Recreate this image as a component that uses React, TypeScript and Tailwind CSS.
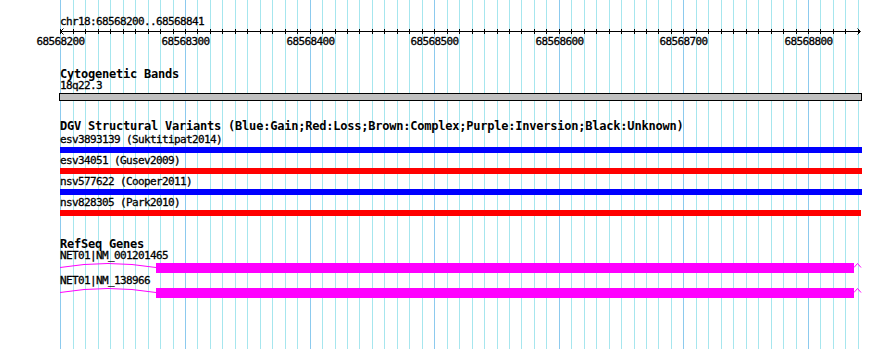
import React from "react";

const fam = "font-['DejaVu_Sans_Mono','Liberation_Mono',monospace]";
const small = `${fam} text-[11px] leading-[12px] tracking-[-0.62px] whitespace-nowrap text-black h-[12px] [-webkit-text-stroke:0.3px_#000]`;
const geneLabel = `${fam} text-[11px] leading-[11px] tracking-[-0.62px] whitespace-nowrap text-black h-[12px] [-webkit-text-stroke:0.3px_#000]`;
const bold = `${fam} font-bold text-[12px] leading-[12px] tracking-[-0.22px] whitespace-nowrap text-black h-[12px]`;

const gridX = Array.from({ length: 65 }, (_, k) => Math.round(60.4 + 12.46 * k));

function Grid() {
  return (
    <svg className="absolute inset-0" width={890} height={349} shapeRendering="crispEdges">
      {gridX.map((x, k) => (
        <rect key={k} x={x} y={0} width={1} height={349} fill={k % 10 === 0 ? "#8ccaee" : "#a6e6ee"} />
      ))}
    </svg>
  );
}

function Ruler() {
  const labels = [0, 1, 2, 3, 4, 5, 6];
  return (
    <svg width={890} height={48} className="block" shapeRendering="crispEdges">
      <text
        x={60}
        y={25}
        fontFamily="'DejaVu Sans Mono', 'Liberation Mono', monospace"
        fontSize={11}
        letterSpacing={-0.62}
        fill="#000"
        stroke="#000"
        strokeWidth={0.3}
        shapeRendering="auto"
      >
        chr18:68568200..68568841
      </text>
      <rect x={60} y={31} width={800} height={1} fill="#000" />
      {gridX.map((x, k) => (
        <rect key={k} x={x} y={29} width={1} height={5} fill="#000" />
      ))}
      <polyline points="63.5,28.5 60.5,31.5 63.5,34.5" fill="none" stroke="#000" strokeWidth={1} shapeRendering="auto" />
      <polyline points="857.5,28.5 860.5,31.5 857.5,34.5" fill="none" stroke="#000" strokeWidth={1} shapeRendering="auto" />
      {labels.map((i) => (
        <text
          key={i}
          x={gridX[i * 10] + 0.5}
          y={45}
          textAnchor="middle"
          fontFamily="'DejaVu Sans Mono', 'Liberation Mono', monospace"
          fontSize={11}
          letterSpacing={-0.62}
          fill="#000"
          stroke="#000"
          strokeWidth={0.3}
          shapeRendering="auto"
        >
          {68568200 + i * 100}
        </text>
      ))}
    </svg>
  );
}

const variants = [
  { label: "esv3893139 (Suktitipat2014)", color: "bg-[#0000ff]", w: "w-[802px]" },
  { label: "esv34051 (Gusev2009)", color: "bg-[#ff0000]", w: "w-[802px]" },
  { label: "nsv577622 (Cooper2011)", color: "bg-[#0000ff]", w: "w-[802px]" },
  { label: "nsv828305 (Park2010)", color: "bg-[#ff0000]", w: "w-[801px]" },
];

function GeneRow() {
  return (
    <div className="mt-px flex items-start h-[10px]">
      <svg width={96} height={10} className="block">
        <polyline points="0,4.5 24,1.5 48,0.5 72,1.5 96,4.5" fill="none" stroke="#ff00ff" strokeWidth={1} />
      </svg>
      <div className="w-[698px] h-[10px] bg-[#ff00ff]" />
      <svg width={8} height={10} className="block">
        <polyline points="0,4.5 3.5,0.5 7,4.5" fill="none" stroke="#ff00ff" strokeWidth={1} />
      </svg>
    </div>
  );
}

export default function App() {
  return (
    <div className="relative w-[890px] h-[349px] bg-white overflow-hidden">
      <Grid />
      <div className="relative flex flex-col">
        <Ruler />
        <div className="pl-[60px] flex flex-col">
          <div className={`mt-[20px] ${bold}`}>Cytogenetic Bands</div>
          <div className={small}>18q22.3</div>
          <div className="mt-px -ml-px w-[803px] h-[8px] border border-black bg-[#c0c0c0]" />

          <div className={`mt-[19px] ${bold}`}>
            DGV Structural Variants (Blue:Gain;Red:Loss;Brown:Complex;Purple:Inversion;Black:Unknown)
          </div>
          {variants.map((v) => (
            <div key={v.label} className="flex flex-col">
              <div className={`mt-[2px] ${small}`}>{v.label}</div>
              <div className={`mt-px h-[6px] ${v.w} ${v.color}`} />
            </div>
          ))}

          <div className={`mt-[22px] ${bold}`}>RefSeq Genes</div>
          <div className={geneLabel}>NET01|NM_001201465</div>
          <GeneRow />
          <div className={`mt-[2px] ${geneLabel}`}>NET01|NM_138966</div>
          <GeneRow />
        </div>
      </div>
    </div>
  );
}
